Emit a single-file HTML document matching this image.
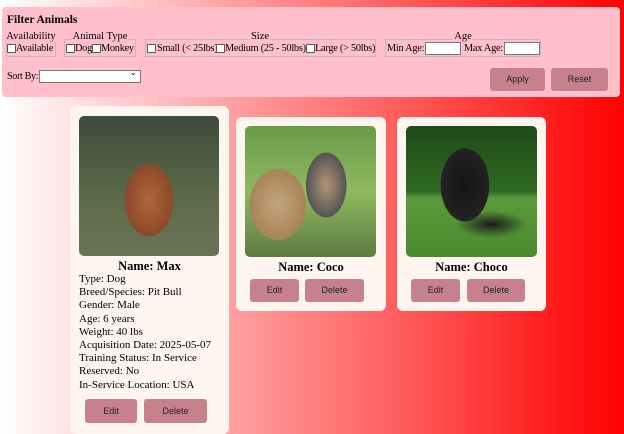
<!DOCTYPE html>
<html><head><style>
body{margin:0;width:624px;height:434px;overflow:hidden;background:linear-gradient(to right,#fff 0%,#ff8080 50%,#ff0000 100%);font-family:"Liberation Serif",serif;font-size:11px;color:#000;position:relative}
.a{position:absolute;white-space:nowrap}
.panel{left:2px;top:7px;width:618px;height:90px;background:#ffc0cb;border-radius:4px}
.fs{position:absolute;border:1px solid #bbb;height:16px;top:39px}
.lg{position:absolute;top:32px;font-size:10.5px;line-height:10px;text-align:center}
.t{position:absolute;top:43px;font-size:10.3px;letter-spacing:-0.25px;line-height:11px}
.cb{position:absolute;top:44px;width:7px;height:7px;border:1px solid #555;background:#fff;border-radius:1px}
.in{position:absolute;top:42px;width:34px;height:11px;border:1px solid #777;background:#fff}
.btn{position:absolute;background:#c7818b;border-radius:3px;font-family:"Liberation Sans",sans-serif;font-size:9px;text-align:center;color:#222}
.card{position:absolute;background:#fff5f0;border-radius:6px}
.img{position:absolute;border-radius:5px;overflow:hidden}
.nm{position:absolute;font-weight:bold;font-size:12.5px;text-align:center}
.info{position:absolute;left:79px;top:273px;font-size:11px;line-height:13.2px}
</style></head><body>
<div class="a panel"></div>
<div class="a" style="left:7px;top:14px;font-weight:bold;font-size:11.5px">Filter Animals</div>

<div class="fs" style="left:6px;width:48px"></div>
<div class="lg a" style="left:6px;width:50px;background:#ffc0cb">Availability</div>
<div class="cb" style="left:7px"></div><div class="t" style="left:16px">Available</div>

<div class="fs" style="left:64px;width:70px"></div>
<div class="lg a" style="left:72px;width:56px;background:#ffc0cb">Animal Type</div>
<div class="cb" style="left:66px"></div><div class="t" style="left:75px">Dog</div>
<div class="cb" style="left:92px"></div><div class="t" style="left:101px">Monkey</div>

<div class="fs" style="left:145px;width:229px"></div>
<div class="lg a" style="left:250px;width:20px;background:#ffc0cb">Size</div>
<div class="cb" style="left:147px"></div><div class="t" style="left:157px">Small (&lt; 25lbs)</div>
<div class="cb" style="left:216px"></div><div class="t" style="left:225px">Medium (25 - 50lbs)</div>
<div class="cb" style="left:306px"></div><div class="t" style="left:315px">Large (&gt; 50lbs)</div>

<div class="fs" style="left:385px;width:154px"></div>
<div class="lg a" style="left:453px;width:20px;background:#ffc0cb">Age</div>
<div class="t" style="left:387px">Min Age:</div><div class="in" style="left:425px"></div>
<div class="t" style="left:464px">Max Age:</div><div class="in" style="left:504px"></div>

<div class="a" style="left:7px;top:71px;font-size:10px;letter-spacing:-0.3px">Sort By:</div>
<div class="a" style="left:39px;top:70px;width:100px;height:11px;border:1px solid #777;background:#fff"><span style="position:absolute;right:3px;top:-4px;font-size:9px">&#8964;</span></div>
<div class="btn" style="left:490px;top:68px;width:55px;height:23px;line-height:23px">Apply</div>
<div class="btn" style="left:551px;top:68px;width:57px;height:23px;line-height:23px">Reset</div>

<div class="card" style="left:70px;top:106px;width:159px;height:328px"></div>
<div class="img" style="left:79px;top:116px;width:140px;height:140px;background:radial-gradient(ellipse 40px 60px at 50% 60%,#b2653a,#8a4a2a 60%,transparent 61%),linear-gradient(180deg,#3d4a3a,#5d6b4a 60%,#6b7356)"></div>
<div class="nm" style="left:70px;top:259px;width:159px">Name: Max</div>
<div class="info">Type: Dog<br>Breed/Species: Pit Bull<br>Gender: Male<br>Age: 6 years<br>Weight: 40 lbs<br>Acquisition Date: 2025-05-07<br>Training Status: In Service<br>Reserved: No<br>In-Service Location: USA</div>
<div class="btn" style="left:85px;top:399px;width:52px;height:24px;line-height:24px">Edit</div>
<div class="btn" style="left:144px;top:399px;width:63px;height:24px;line-height:24px">Delete</div>

<div class="card" style="left:236px;top:117px;width:150px;height:194px"></div>
<div class="img" style="left:245px;top:126px;width:131px;height:131px;background:radial-gradient(ellipse 40px 50px at 25% 60%,#c4a57a,#a88458 70%,transparent 71%),radial-gradient(ellipse 25px 40px at 62% 45%,#b49473,#555 80%,transparent 82%),linear-gradient(180deg,#6a9a48,#8fb860 50%,#5d7d40)"></div>
<div class="nm" style="left:236px;top:260px;width:150px">Name: Coco</div>
<div class="btn" style="left:250px;top:279px;width:49px;height:23px;line-height:23px">Edit</div>
<div class="btn" style="left:305px;top:279px;width:59px;height:23px;line-height:23px">Delete</div>

<div class="card" style="left:397px;top:117px;width:149px;height:194px"></div>
<div class="img" style="left:406px;top:126px;width:131px;height:131px;background:radial-gradient(ellipse 30px 45px at 45% 45%,#151515,#222 80%,transparent 82%),radial-gradient(ellipse 40px 15px at 65% 75%,#1a1a1a,transparent 90%),linear-gradient(180deg,#1f4a1a,#2f6a22 50%,#5a9a3a 55%,#4a8a2e)"></div>
<div class="nm" style="left:397px;top:260px;width:149px">Name: Choco</div>
<div class="btn" style="left:411px;top:279px;width:49px;height:23px;line-height:23px">Edit</div>
<div class="btn" style="left:467px;top:279px;width:58px;height:23px;line-height:23px">Delete</div>
</body></html>
